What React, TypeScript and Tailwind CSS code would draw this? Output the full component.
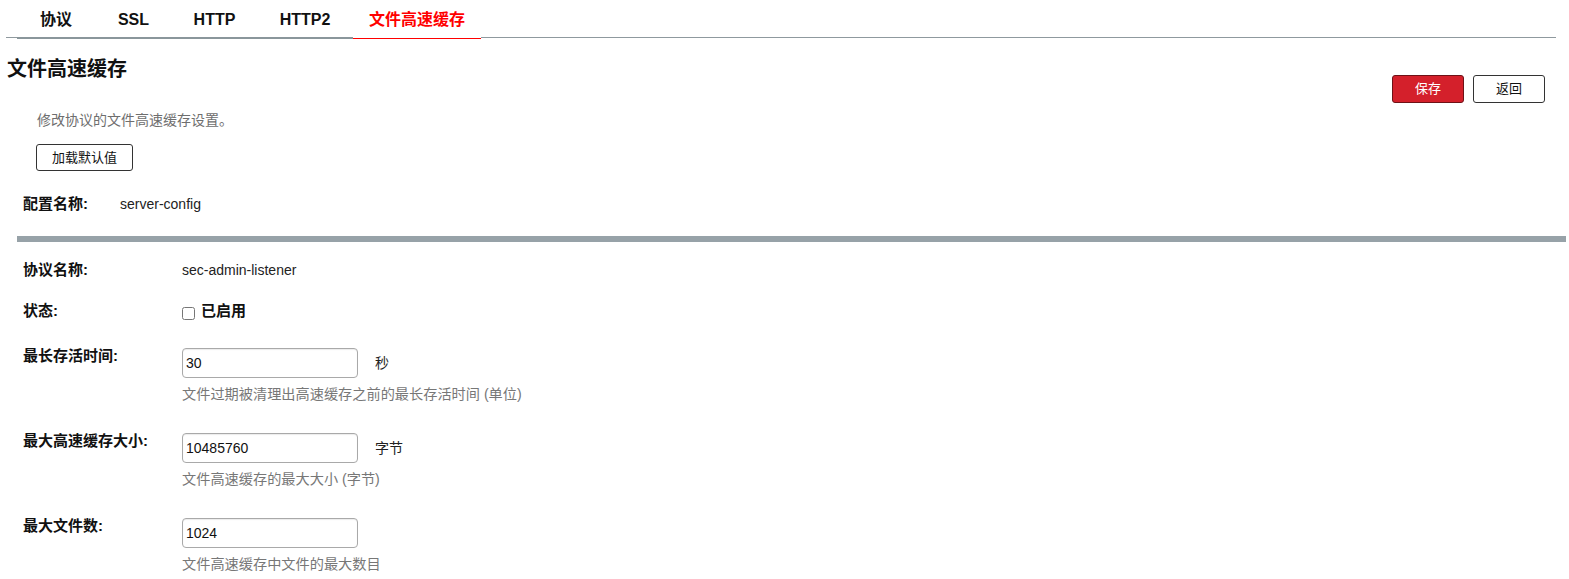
import React from "react";

const tabs = [
  { label: "协议", w: "w-[78px]" },
  { label: "SSL", w: "w-[77px]" },
  { label: "HTTP", w: "w-[85px]" },
  { label: "HTTP2", w: "w-[96px]" },
];

function FieldRow({
  label,
  value,
  unit,
  help,
  className,
}: {
  label: string;
  value: string;
  unit?: string;
  help: string;
  className?: string;
}) {
  return (
    <div className={"flex pl-[23px] " + (className ?? "")}>
      <div className="w-[159px] text-[15px] leading-[16px] font-bold text-[#111]">{label}</div>
      <div className="flex flex-col">
        <div className="flex items-center gap-[17px]">
          <input
            type="text"
            defaultValue={value}
            className="w-[176px] h-[30px] border border-[#a9a9a9] rounded-[4px] pl-[3px] text-[14px] text-[#111] outline-none shadow-[inset_0_1px_1px_rgba(0,0,0,0.08)]"
          />
          {unit && <span className="text-[14px] text-[#222]">{unit}</span>}
        </div>
        <div className="mt-[7px] text-[14.2px] leading-[18px] text-[#777]">{help}</div>
      </div>
    </div>
  );
}

export default function App() {
  return (
    <div className="w-[1569px] h-[579px] bg-white overflow-hidden font-['Liberation_Sans','Noto_Sans_CJK_SC',sans-serif] text-[#111]">
      {/* Tabs */}
      <div className="flex items-start ml-[6px] mr-[13px]">
        <div className="w-[11px] h-[38px] border-b border-[#8f999e]" />
        {tabs.map((t) => (
          <div key={t.label} className={t.w + " h-[39px] flex flex-col"}>
            <div className="h-[37px] pt-[10px] text-center text-[16px] leading-[20px] font-bold text-[#111]">
              {t.label}
            </div>
            <div className="h-[2px] bg-[#8a969b]" />
          </div>
        ))}
        <div className="w-[128px] h-[39px] flex flex-col">
          <div className="h-[37px] pt-[10px] text-center text-[16px] leading-[20px] font-bold text-[#ff0000]">
            文件高速缓存
          </div>
          <div className="h-[1px] bg-white" />
          <div className="h-[1px] bg-[#ff0000]" />
        </div>
        <div className="flex-1 h-[38px] border-b border-[#8f999e]" />
      </div>

      {/* Heading + actions */}
      <div className="flex justify-between pr-[24px]">
        <div className="pl-[7px] pt-[18px]">
          <h1 className="text-[20px] leading-[24px] font-bold text-[#111]">文件高速缓存</h1>
        </div>
        <div className="flex gap-[9px] pt-[36px]">
          <button className="w-[72px] h-[28px] bg-[#d4202b] border border-[#6e1217] rounded-[3px] text-white text-[13px]">
            保存
          </button>
          <button className="w-[72px] h-[28px] bg-white border border-[#333] rounded-[3px] text-[#111] text-[13px]">
            返回
          </button>
        </div>
      </div>

      <div className="pl-[37px] mt-[8px] text-[14px] leading-[18px] text-[#6e6e6e]">修改协议的文件高速缓存设置。</div>

      <button className="ml-[36px] mt-[15px] w-[97px] h-[27px] bg-white border border-[#333] rounded-[3px] text-[13px] text-[#111] block">
        加载默认值
      </button>

      <div className="flex pl-[23px] mt-[23px] leading-[20px]">
        <div className="w-[97px] text-[15px] font-bold">配置名称:</div>
        <div className="text-[14px] text-[#222]">server-config</div>
      </div>

      <div className="ml-[17px] mr-[3px] mt-[22px] h-[6px] bg-[#97a2a8]" />

      <div className="flex pl-[23px] mt-[18px] leading-[20px]">
        <div className="w-[159px] text-[15px] font-bold">协议名称:</div>
        <div className="text-[14px] text-[#222]">sec-admin-listener</div>
      </div>

      <div className="flex pl-[23px] mt-[21px] leading-[20px]">
        <div className="w-[159px] text-[15px] font-bold">状态:</div>
        <div className="flex items-center">
          <input type="checkbox" className="w-[13px] h-[13px] mt-[5px]" />
          <span className="ml-[6px] text-[15px] font-bold">已启用</span>
        </div>
      </div>

      <FieldRow
        className="mt-[27px]"
        label="最长存活时间:"
        value="30"
        unit="秒"
        help="文件过期被清理出高速缓存之前的最长存活时间 (单位)"
      />
      <FieldRow
        className="mt-[30px]"
        label="最大高速缓存大小:"
        value="10485760"
        unit="字节"
        help="文件高速缓存的最大大小 (字节)"
      />
      <FieldRow
        className="mt-[30px]"
        label="最大文件数:"
        value="1024"
        help="文件高速缓存中文件的最大数目"
      />
    </div>
  );
}
